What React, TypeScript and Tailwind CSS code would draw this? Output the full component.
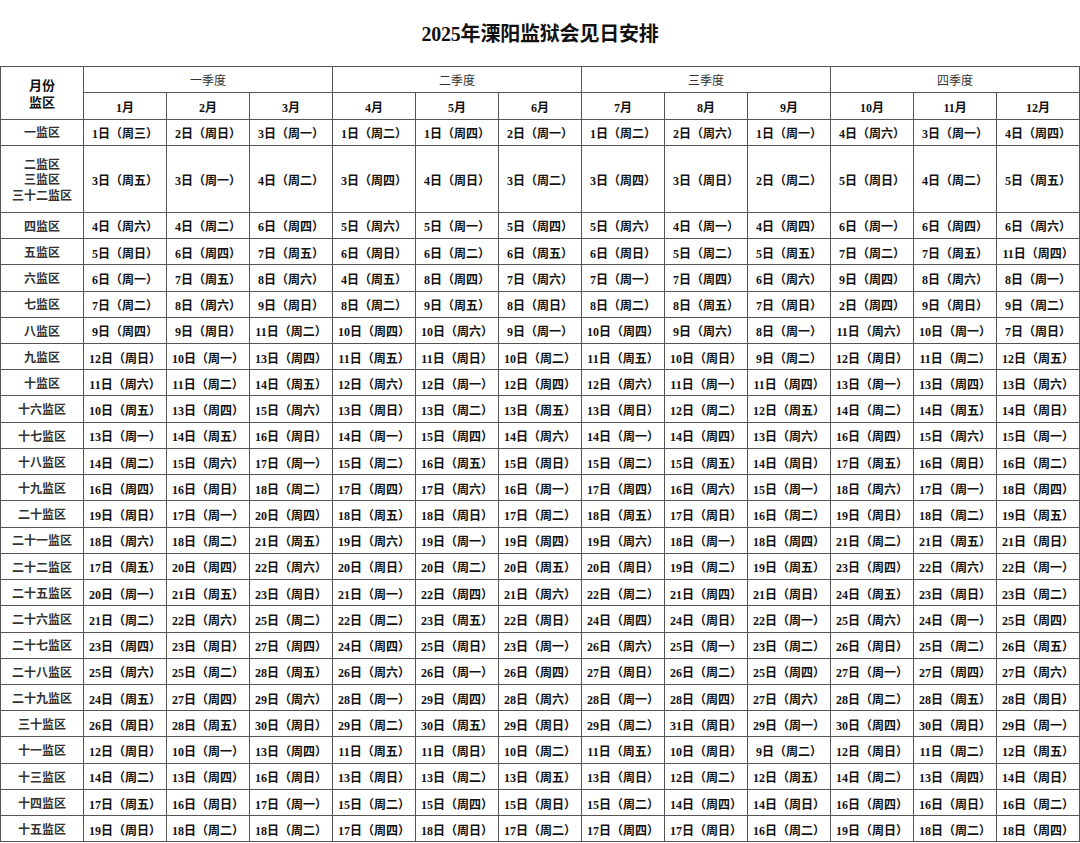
import React from "react";

const raw: [string, string][] = [
  ["一监区", "1三 2日 3一 1二 1四 2一 1二 2六 1一 4六 3一 4四"],
  ["二监区|三监区|三十二监区", "3五 3一 4二 3四 4日 3二 3四 3日 2二 5日 4二 5五"],
  ["四监区", "4六 4二 6四 5六 5一 5四 5六 4一 4四 6一 6四 6六"],
  ["五监区", "5日 6四 7五 6日 6二 6五 6日 5二 5五 7二 7五 11四"],
  ["六监区", "6一 7五 8六 4五 8四 7六 7一 7四 6六 9四 8六 8一"],
  ["七监区", "7二 8六 9日 8二 9五 8日 8二 8五 7日 2四 9日 9二"],
  ["八监区", "9四 9日 11二 10四 10六 9一 10四 9六 8一 11六 10一 7日"],
  ["九监区", "12日 10一 13四 11五 11日 10二 11五 10日 9二 12日 11二 12五"],
  ["十监区", "11六 11二 14五 12六 12一 12四 12六 11一 11四 13一 13四 13六"],
  ["十六监区", "10五 13四 15六 13日 13二 13五 13日 12二 12五 14二 14五 14日"],
  ["十七监区", "13一 14五 16日 14一 15四 14六 14一 14四 13六 16四 15六 15一"],
  ["十八监区", "14二 15六 17一 15二 16五 15日 15二 15五 14日 17五 16日 16二"],
  ["十九监区", "16四 16日 18二 17四 17六 16一 17四 16六 15一 18六 17一 18四"],
  ["二十监区", "19日 17一 20四 18五 18日 17二 18五 17日 16二 19日 18二 19五"],
  ["二十一监区", "18六 18二 21五 19六 19一 19四 19六 18一 18四 21二 21五 21日"],
  ["二十二监区", "17五 20四 22六 20日 20二 20五 20日 19二 19五 23四 22六 22一"],
  ["二十五监区", "20一 21五 23日 21一 22四 21六 22二 21四 21日 24五 23日 23二"],
  ["二十六监区", "21二 22六 25二 22二 23五 22日 24四 24日 22一 25六 24一 25四"],
  ["二十七监区", "23四 23日 27四 24四 25日 23一 26六 25一 23二 26日 25二 26五"],
  ["二十八监区", "25六 25二 28五 26六 26一 26四 27日 26二 25四 27一 27四 27六"],
  ["二十九监区", "24五 27四 29六 28一 29四 28六 28一 28四 27六 28二 28五 28日"],
  ["三十监区", "26日 28五 30日 29二 30五 29日 29二 31日 29一 30四 30日 29一"],
  ["十一监区", "12日 10一 13四 11五 11日 10二 11五 10日 9二 12日 11二 12五"],
  ["十三监区", "14二 13四 16日 13日 13二 13五 13日 12二 12五 14二 13四 14日"],
  ["十四监区", "17五 16日 17一 15二 15四 15日 15二 14四 14日 16四 16日 16二"],
  ["十五监区", "19日 18二 18二 17四 18日 17二 17四 17日 16二 19日 18二 18四"],
];

const rows = raw.map(([label, data]) => ({
  label: label.split("|"),
  cells: data.split(" ").map((t) => ({ n: t.slice(0, -1), d: t.slice(-1) })),
}));

const quarters = ["一季度", "二季度", "三季度", "四季度"];
const months = Array.from({ length: 12 }, (_, i) => `${i + 1}月`);

const font = { fontFamily: '"Liberation Serif", "Noto Sans CJK SC", serif' };

export default function App() {
  return (
    <div className="w-[1080px] bg-white text-[#111]" style={font}>
      <div className="h-[66px] flex items-center justify-center pt-[2px]">
        <h1 className="text-[20px] font-bold tracking-[-0.2px] text-[#111]">2025年溧阳监狱会见日安排</h1>
      </div>
      <table className="table-fixed border-collapse w-[1079px] text-[12px]">
        <colgroup>
          {Array.from({ length: 13 }).map((_, i) => (
            <col key={i} className="w-[83px]" />
          ))}
        </colgroup>
        <thead>
          <tr className="h-[26px]">
            <th
              rowSpan={2}
              className="border border-[#555] text-[13px] font-bold leading-[17px] text-[#111] pt-[2px]"
            >
              <div>月份</div>
              <div>监区</div>
            </th>
            {quarters.map((q) => (
              <th key={q} colSpan={3} className="border border-[#555] font-normal text-[#333] pt-[2px] p-0">
                {q}
              </th>
            ))}
          </tr>
          <tr className="h-[26.5px]">
            {months.map((m) => (
              <th key={m} className="border border-[#555] font-bold text-[#111] pt-[4px] px-0 pb-0">
                {m}
              </th>
            ))}
          </tr>
        </thead>
        <tbody>
          {rows.map((r, ri) => (
            <tr key={ri} className={ri === 1 ? "h-[67px]" : ri === 0 ? "h-[26.3px]" : "h-[26.24px]"}>
              <td className="border border-[#555] text-center font-semibold text-[#333] leading-[15.5px] pt-[4px] px-0 pb-0">
                {r.label.map((l) => (
                  <div key={l}>{l}</div>
                ))}
              </td>
              {r.cells.map((c, ci) => (
                <td key={ci} className="border border-[#555] text-center font-semibold pt-[4px] px-0 pb-0 whitespace-nowrap">
                  <span className="font-bold">{c.n}</span>日（周{c.d}）
                </td>
              ))}
            </tr>
          ))}
        </tbody>
      </table>
    </div>
  );
}
